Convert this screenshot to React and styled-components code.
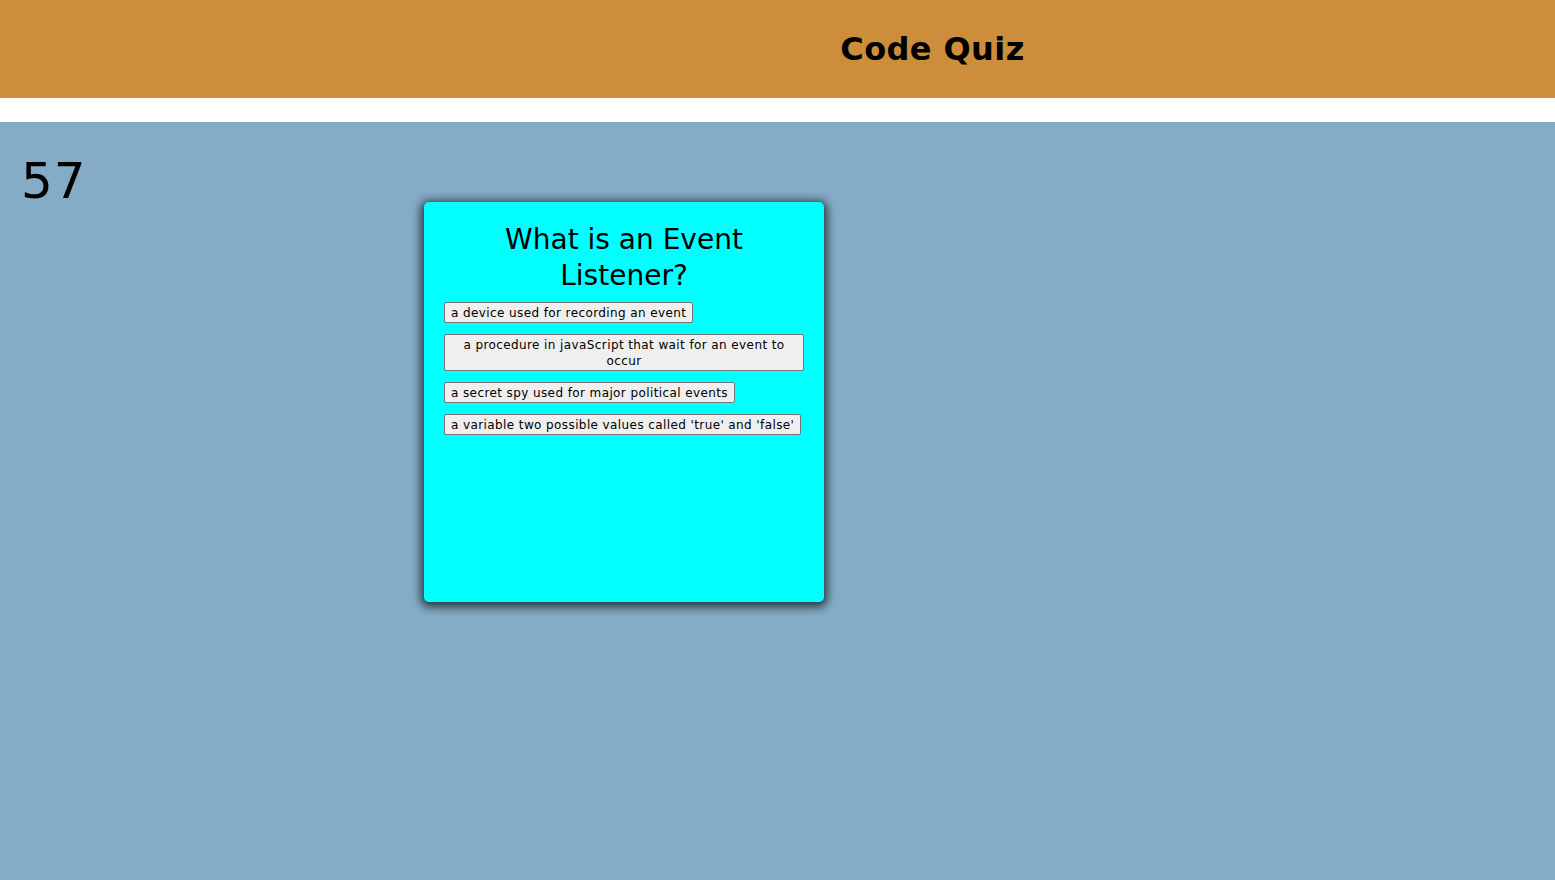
import React from 'react';
import styled, { createGlobalStyle } from 'styled-components';

const GlobalStyle = createGlobalStyle`
  html, body {
    margin: 0;
    padding: 0;
    background: #84acc6;
    font-family: "DejaVu Sans", Verdana, sans-serif;
  }
`;

const Page = styled.div`
  min-height: 880px;
  display: flex;
  flex-direction: column;
`;

const Header = styled.header`
  height: 98px;
  background: #cd8e3b;
  display: flex;
  align-items: center;
  justify-content: center;
  padding-left: 310px;
  margin-bottom: 24px;
  box-shadow: 0 24px 0 #ffffff;
`;

const Title = styled.h1`
  margin: 0;
  font-size: 32px;
  font-weight: bold;
  letter-spacing: 0.4px;
  color: #000;
`;

const Main = styled.main`
  display: grid;
  grid-template-columns: 403px 400px;
  align-items: start;
  padding: 30px 21px;
`;

const Timer = styled.div`
  font-size: 50px;
  letter-spacing: 1px;
  color: #000;
`;

const Card = styled.section`
  margin-top: 50px;
  height: 400px;
  box-sizing: border-box;
  padding: 20px;
  background: #00ffff;
  border-radius: 5px;
  box-shadow: 0 2px 10px 3px rgba(0, 0, 0, 0.7);
`;

const Question = styled.h2`
  margin: 0 0 8px;
  font-size: 28px;
  font-weight: normal;
  line-height: 36px;
  text-align: center;
  color: #000;
`;

const Answer = styled.button`
  display: block;
  max-width: 100%;
  margin-bottom: 11px;
  padding: 2px 6px 1px;
  font-family: "DejaVu Sans", Verdana, sans-serif;
  font-size: 12px;
  letter-spacing: 0.4px;
  line-height: 16px;
  color: #000;
  background: #efefef;
  border: 1px solid #767676;
  border-radius: 2px;
  text-align: center;
`;

const answers = [
  'a device used for recording an event',
  'a procedure in javaScript that wait for an event to occur',
  'a secret spy used for major political events',
  "a variable two possible values called 'true' and 'false'",
];

export default function App() {
  return (
    <Page>
      <GlobalStyle />
      <Header>
        <Title>Code Quiz</Title>
      </Header>
      <Main>
        <Timer>57</Timer>
        <Card>
          <Question>What is an Event Listener?</Question>
          {answers.map((a) => (
            <Answer key={a}>{a}</Answer>
          ))}
        </Card>
      </Main>
    </Page>
  );
}
